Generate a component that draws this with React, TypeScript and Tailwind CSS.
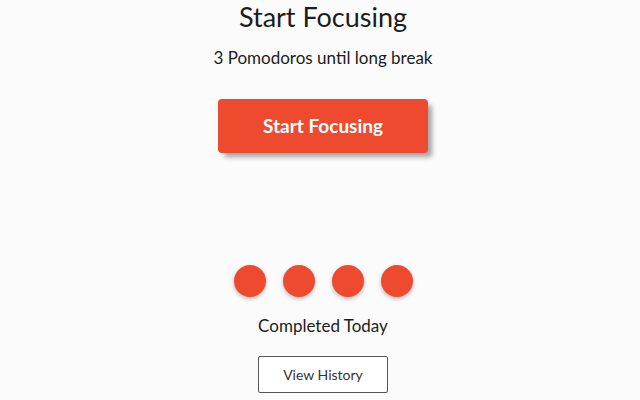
export default function App() {
  const completed = [0, 1, 2, 3];

  return (
    <div className="flex h-[400px] w-[640px] flex-col items-center overflow-hidden bg-[#fbfbfb] pl-[6px] font-['Lato',sans-serif] text-[#1c1c1c]">
      <h1 className="mt-0 text-[27px] leading-[34px]">Start Focusing</h1>
      <p className="mt-[13px] text-[17px] leading-[22px]">3 Pomodoros until long break</p>

      <button className="mt-[30px] h-[54px] w-[210px] rounded-[4px] bg-[#ee4a30] text-[19px] font-bold text-white shadow-[5px_5px_5px_-1px_rgba(0,0,0,0.35)]">
        Start Focusing
      </button>

      <div className="mt-[112px] flex gap-[17px]">
        {completed.map((i) => (
          <span key={i} className="h-8 w-8 rounded-full bg-[#ee4a30] shadow-[0_2px_4px_rgba(0,0,0,0.25)]" />
        ))}
      </div>

      <p className="mt-[18px] text-[17px] leading-[22px]">Completed Today</p>

      <button className="mt-[19px] h-[37px] w-[130px] rounded-[2px] border border-[#555] bg-white text-[14px] text-[#333]">
        View History
      </button>
    </div>
  );
}
